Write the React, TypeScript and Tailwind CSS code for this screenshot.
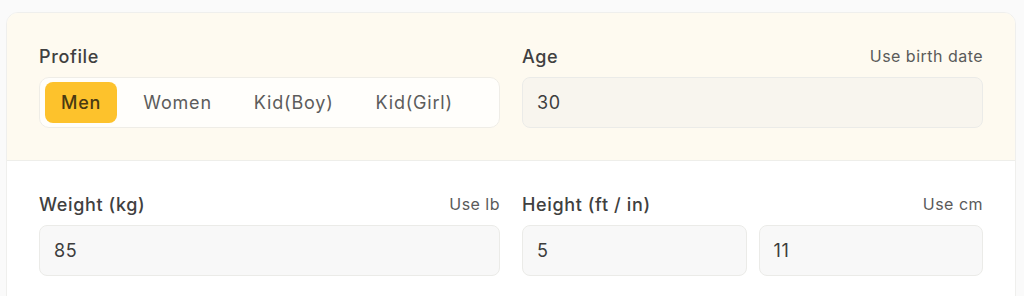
import { useState } from "react";

const profiles = ["Men", "Women", "Kid(Boy)", "Kid(Girl)"];

function Field({ label, hint, children }: { label: string; hint?: string; children: React.ReactNode }) {
  return (
    <div className="flex flex-col">
      <div className="flex items-center justify-between mb-[9px] h-6">
        <span className="text-[18px] font-medium tracking-[0.035em] text-[#404040]">{label}</span>
        {hint && <span className="text-[16px] tracking-[0.03em] text-[#5a5a5a]">{hint}</span>}
      </div>
      {children}
    </div>
  );
}

function Input({ value, tone = "gray" }: { value: string; tone?: "gray" | "cream" }) {
  return (
    <div
      className={`h-[51px] flex items-center px-[14px] rounded-lg border border-[#ebebe8] text-[18px] tracking-[0.035em] text-[#3d3d3d] ${
        tone === "cream" ? "bg-[#f8f5ee]" : "bg-[#f8f8f8]"
      }`}
    >
      {value}
    </div>
  );
}

export default function App() {
  const [profile, setProfile] = useState("Men");

  return (
    <div className="h-[296px] overflow-hidden bg-[#fafafa] pt-3 pl-[6px] pr-2 font-['Inter',_'Liberation_Sans',_sans-serif]">
      <div className="rounded-xl border border-[#efefed] bg-white overflow-hidden h-[300px]">
        <div className="bg-[#fefaf0] border-b border-[#eeeeea] px-8 pt-[31px] pb-[32px] grid grid-cols-2 gap-[22px]">
          <Field label="Profile">
            <div className="h-[51px] flex items-center gap-[10px] p-[5px] rounded-[10px] border border-[#efede7] bg-[#fffefb]">
              {profiles.map((p) => (
                <button
                  key={p}
                  onClick={() => setProfile(p)}
                  className={`h-[41px] px-4 rounded-lg text-[18px] tracking-[0.045em] ${
                    profile === p ? "bg-[#fdc22c] text-[#4a3a12] font-medium" : "text-[#5c5c5c]"
                  }`}
                >
                  {p}
                </button>
              ))}
            </div>
          </Field>
          <Field label="Age" hint="Use birth date">
            <Input value="30" tone="cream" />
          </Field>
        </div>
        <div className="px-8 pt-[31px] grid grid-cols-2 gap-[22px]">
          <Field label="Weight (kg)" hint="Use lb">
            <Input value="85" />
          </Field>
          <Field label="Height (ft / in)" hint="Use cm">
            <div className="grid grid-cols-2 gap-3">
              <Input value="5" />
              <Input value="11" />
            </div>
          </Field>
        </div>
      </div>
    </div>
  );
}
